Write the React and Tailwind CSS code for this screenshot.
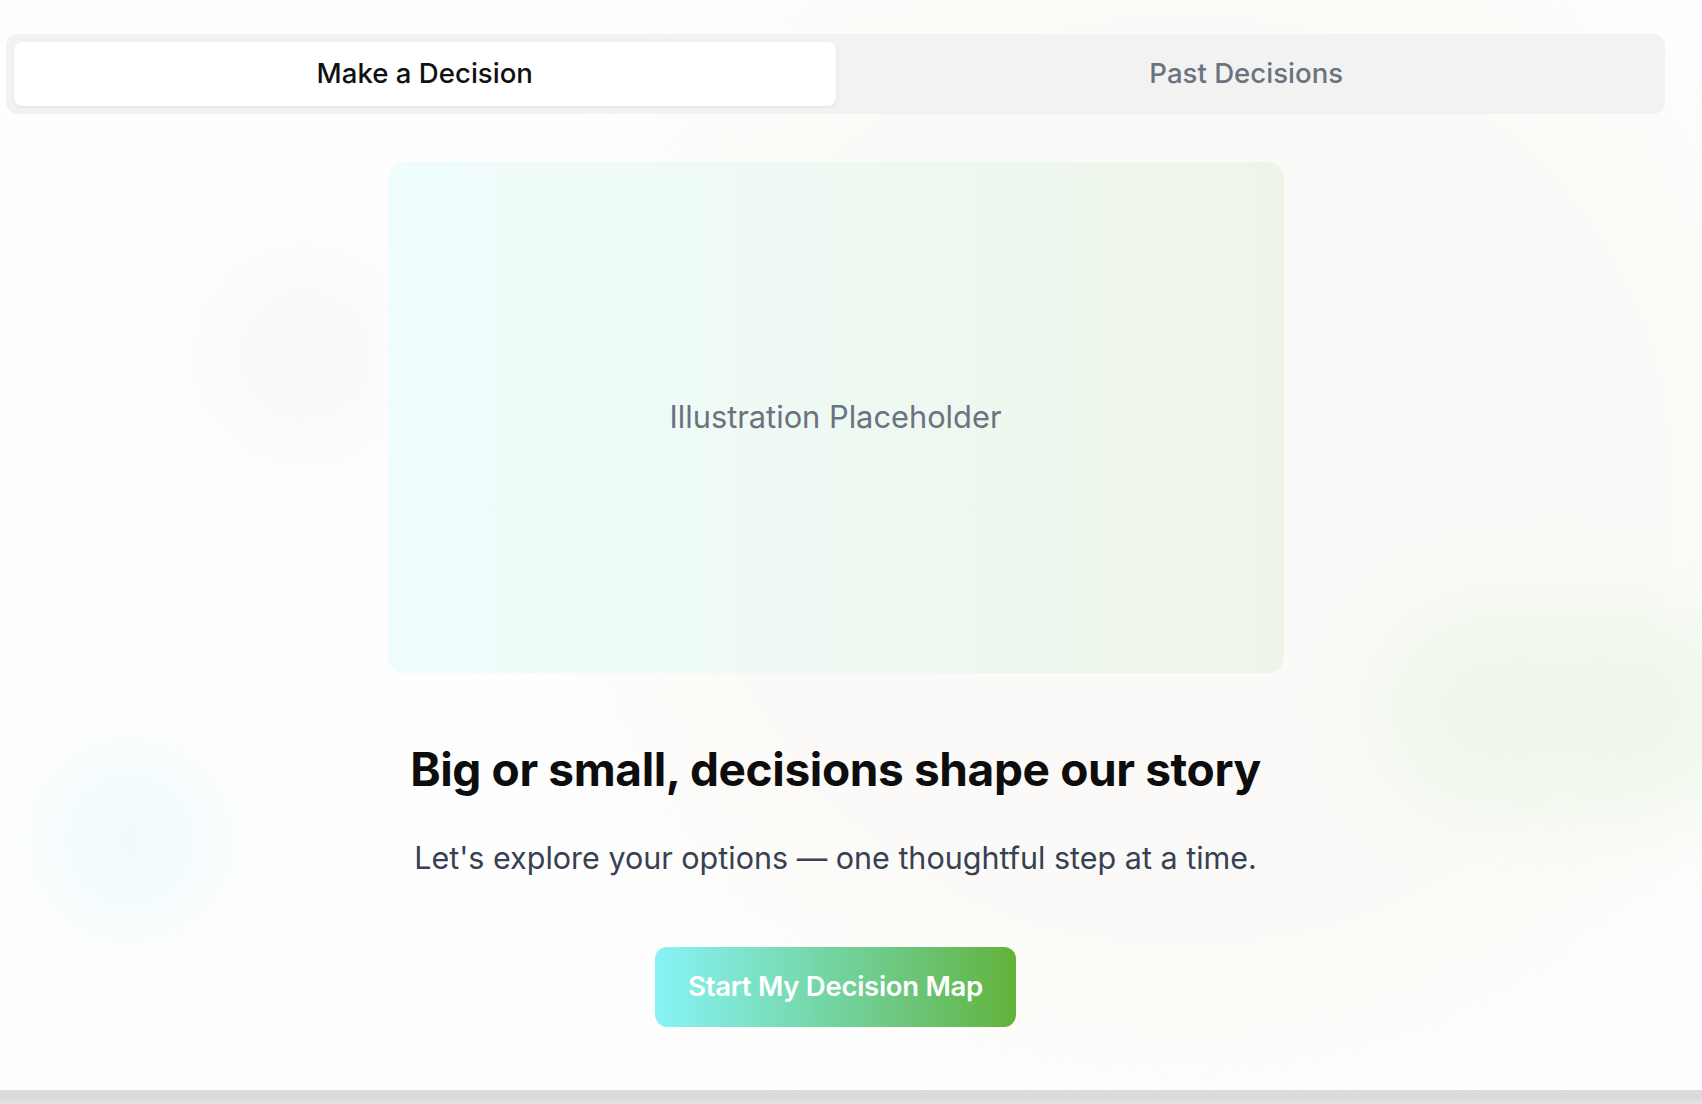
export default function App() {
  return (
    <div className="relative h-[1104px] w-full overflow-hidden bg-[#fefefe] flex flex-col" style={{ fontFamily: 'Inter, "Noto Sans", sans-serif' }}>
      {/* background blobs */}
      <div className="pointer-events-none absolute left-[560px] top-[-120px] h-[1200px] w-[1250px] rounded-full bg-[#fbfaf7] blur-[60px] opacity-80" />
      <div className="pointer-events-none absolute left-[210px] top-[260px] h-[190px] w-[190px] rounded-full bg-[#f9f8fb] blur-[30px]" />
      <div className="pointer-events-none absolute left-[45px] top-[755px] h-[170px] w-[170px] rounded-full bg-[#f1fbfc] blur-[30px]" />
      <div className="pointer-events-none absolute left-[1380px] top-[610px] h-[200px] w-[360px] rounded-full bg-[#eef7e9] blur-[40px]" />

      <main className="relative flex-1 ml-[6px] w-[1659px] pt-[34px] flex flex-col items-center">
        <div className="w-full h-[80px] rounded-xl bg-[#f2f2f3] p-2 flex">
          <button className="flex-1 h-16 rounded-lg bg-white shadow-[0_1px_3px_rgba(0,0,0,0.08)] text-[27.6px] font-medium text-[#111111]">
            Make a Decision
          </button>
          <button className="flex-1 h-16 rounded-lg text-[27.6px] font-medium text-[#6b7280]">
            Past Decisions
          </button>
        </div>

        <div className="mt-[48px] w-[896px] h-[511px] rounded-2xl bg-gradient-to-r from-[#effdfd] to-[#eef5e8] flex items-center justify-center">
          <span className="text-[30.8px] text-[#6b7280]">Illustration Placeholder</span>
        </div>

        <h1 className="mt-[69px] text-[46px] leading-[1.2] font-bold text-[#0d0d0d] tracking-[-0.008em]">
          Big or small, decisions shape our story
        </h1>

        <p className="mt-[38px] text-[30.5px] leading-[1.5] text-[#374151]">
          Let's explore your options — one thoughtful step at a time.
        </p>

        <button className="mt-[66px] h-[80px] px-[33px] rounded-xl bg-gradient-to-r from-[#88f3f7] to-[#62b236] text-white text-[27.5px] font-semibold tracking-[-0.01em]">
          Start My Decision Map
        </button>
      </main>

      <div className="relative h-[14px] w-full bg-gradient-to-b from-[#dddddd] via-[#d9d9d9] to-[#e4e4e4]" />
    </div>
  );
}
